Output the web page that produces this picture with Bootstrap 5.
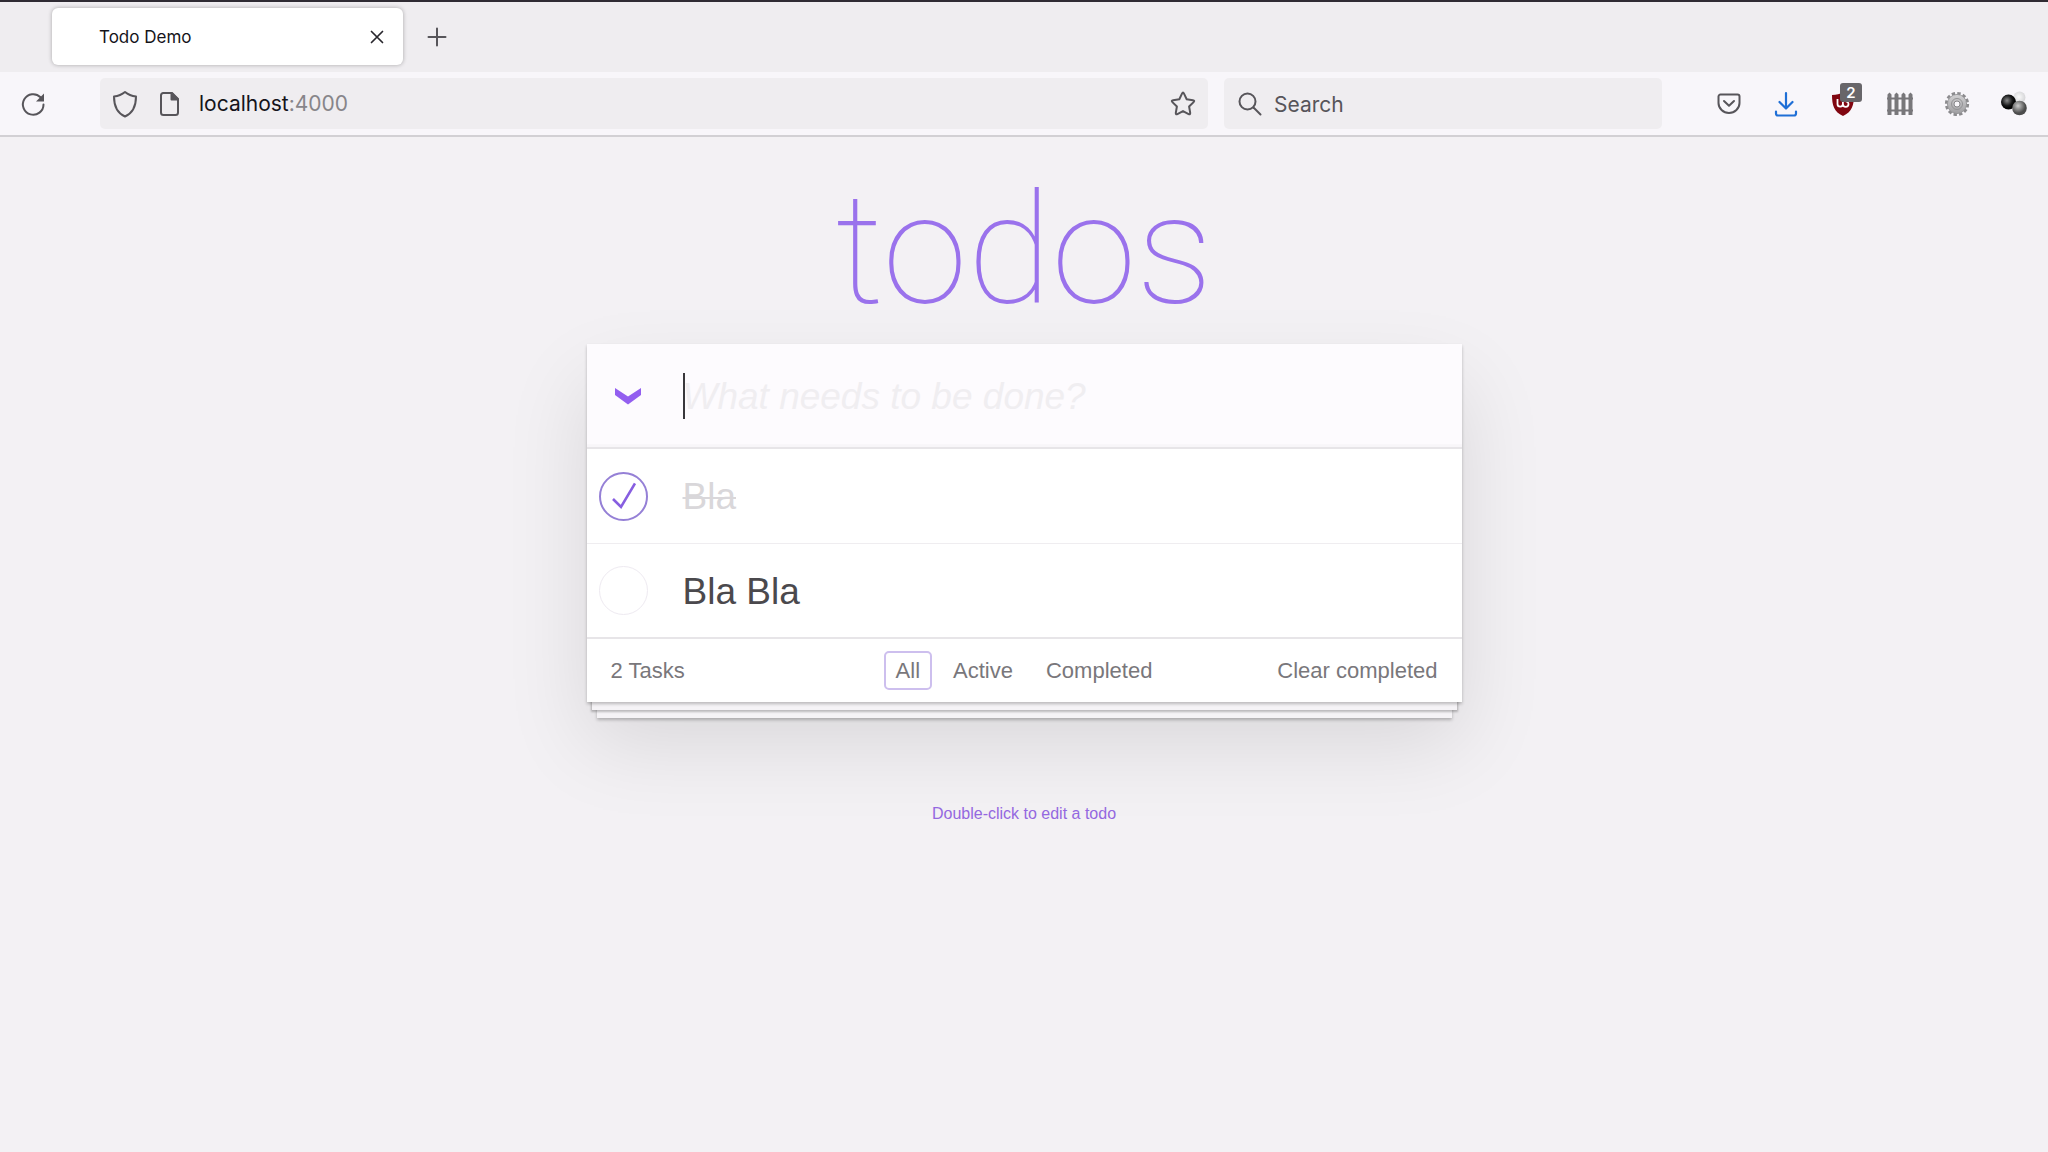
<!DOCTYPE html>
<html lang="en">
<head>
<meta charset="utf-8">
<meta name="viewport" content="width=device-width, initial-scale=1">
<title>Todo Demo</title>
<link href="https://cdn.jsdelivr.net/npm/bootstrap@5.3.0/dist/css/bootstrap.min.css" rel="stylesheet">
<style>
  :root { --ink: #4b494d; --violet: #9a72ec; --line: #e7e5e8; }
  body { background: #f3f1f4; font-family: Inter, sans-serif; }
  button { background: none; border: 0; padding: 0; color: inherit; }
  svg { display: block; }

  /* browser chrome */
  .tab-strip { height: 72px; padding: 6px 0 0 52px; background: #efedf0; border-top: 2px solid #2f2b33; }
  .page-tab { width: 351px; height: 57px; padding: 0 17px 0 47px; border-radius: 6px; background: #fff; box-shadow: 0 0 4px rgba(0,0,0,.3); font-size: 17px; color: #15141a; }
  .page-tab span { padding-top: 2px; }
  .new-tab { width: 68px; height: 57px; color: #57555a; }
  .tool-bar { height: 65px; padding-right: 6px; background: #f8f6fa; border-bottom: 2px solid #d2d0d4; color: #57555a; }
  .reload { width: 65px; margin-right: 35px; }
  .field { height: 51px; border-radius: 5px; background: #efedf0; }
  .field input { width: 100%; min-width: 0; border: 0; padding: 2px 0 0; background: none; outline: 0; font-size: 21px; color: #57555a; }
  .field input::placeholder { color: #57555a; opacity: 1; }
  .url-field { padding: 0 12px; margin-right: 16px; }
  .url-text { margin-left: 13px; font-size: 21px; color: #15141a; text-decoration: none; }
  .url-text span { color: #87858a; }
  .search-field { width: 438px; padding: 0 14px; margin-right: 38px; }
  .tool { width: 57px; height: 48px; }
  .count-badge { top: 3px; left: 26px; width: 22px; height: 19px; border-radius: 3px; background: #68666a; color: #fff; font-size: 15px; font-weight: 600; line-height: 19px; }

  /* todo app */
  .todo-app { font-family: "Liberation Sans", Arial, sans-serif; color: var(--ink); padding-top: 20px; }
  .todo-app h1 { margin: 0; font-family: Roboto, sans-serif; font-weight: 100; font-size: 154px; line-height: 187px; color: var(--violet); }
  .todo-card { width: 875px; max-width: 100%; background: #fff; box-shadow: 0 2px 3px rgba(0,0,0,.24), 0 13px 0 -5px #f5f3f6, 0 14px 2px -4px rgba(0,0,0,.24), 0 26px 0 -10px #f5f3f6, 0 28px 3px -10px rgba(0,0,0,.24), 0 40px 80px 0 rgba(0,0,0,.11); }
  .entry { height: 105px; background: #fdfbfe; border-bottom: 2px solid var(--line); box-shadow: inset 0 -3px 1px rgba(0,0,0,.02); }
  .lead-cell { width: 75px; flex: none; }
  .lead-cell button { padding-left: 1px; margin-left: 2px; }
  .entry input { width: 100%; height: 60px; padding: 2px 0 0; margin-left: 21px; border: 0; outline: 0; background: none; font-size: 37px; color: var(--ink); }
  .entry input::placeholder { font-style: italic; color: #f0eef1; opacity: 1; }
  .text-caret { left: 96px; width: 2px; height: 46px; background: #39373b; }
  .task { height: 94px; }
  .task + .task { border-top: 1px solid #efedf0; }
  .task label { padding-top: 2px; margin-left: 21px; font-size: 37px; line-height: 48px; }
  .task .done { color: #d9d7da; text-decoration: line-through; text-decoration-thickness: 2px; }
  .toggle { appearance: none; width: 49px; height: 49px; margin: 0 0 0 12px; border: 1px solid #eeeaf1; border-radius: 50%; }
  .toggle:checked { border: 2px solid #9580d6; }
  .tick { left: 25px; pointer-events: none; }
  .foot { display: grid; grid-template-columns: 1fr auto 1fr; align-items: center; height: 65px; padding: 0 24px; border-top: 2px solid var(--line); font-size: 22px; color: #79777b; }
  .filters { gap: 9px; }
  .filters a { padding: 3px 10px; border: 2px solid transparent; border-radius: 5px; line-height: 29px; color: inherit; text-decoration: none; }
  .filters .chosen { border-color: #cdbfee; }
  .hint { margin: 100px 0 0; font-size: 16px; line-height: 24px; color: #9468e0; }
</style>
<script src="https://cdn.jsdelivr.net/npm/bootstrap@5.3.0/dist/js/bootstrap.bundle.min.js"></script>
</head>
<body>
<header>
  <div class="tab-strip d-flex">
    <div class="page-tab d-flex align-items-center justify-content-between">
      <span>Todo Demo</span>
      <button type="button" aria-label="Close tab"><svg width="18" height="18" viewBox="0 0 18 18" fill="none" stroke="#29272d" stroke-width="1.7" stroke-linecap="round"><path d="M3.5 3.500l11 11M14.500 3.500l-11 11"/></svg></button>
    </div>
    <button type="button" class="new-tab d-flex align-items-center justify-content-center" aria-label="New tab"><svg width="20" height="20" viewBox="0 0 20 20" fill="none" stroke="currentColor" stroke-width="2" stroke-linecap="round"><path d="M10 1.500v17M1.500 10h17"/></svg></button>
  </div>
  <div class="tool-bar d-flex align-items-center">
    <button type="button" class="reload d-flex justify-content-center" aria-label="Reload"><svg width="26" height="26" viewBox="0 0 26 26" fill="none" stroke="currentColor" stroke-width="2" stroke-linecap="round"><path d="M23.500 13.500A10.300 10.300 0 1 1 20.500 6.200"/><path d="M24 2.500v8h-8z" fill="currentColor" stroke="none"/></svg></button>
    <div class="field url-field d-flex align-items-center flex-grow-1">
      <svg width="26" height="28" viewBox="0 0 26 28" fill="none" stroke="currentColor" stroke-width="2" stroke-linejoin="round"><path d="M13 2c3 2.500 6.500 4 11 4.500C24 15 21 23 13 26.500 5 23 2 15 2 6.500 6.500 6 10 4.500 13 2z"/></svg>
      <svg class="ms-3" width="32" height="26" viewBox="-5 0 32 26" fill="none" stroke="currentColor" stroke-width="2" stroke-linejoin="round"><path d="M4 2h9l6 6v13.500a2.500 2.500 0 0 1-2.500 2.500h-12A2.500 2.500 0 0 1 2 21.500V4.500A2.500 2.500 0 0 1 4 2z"/><path d="M12.500 2v6.500H19z" fill="currentColor"/></svg>
      <a class="url-text flex-grow-1" href="#">localhost<span>:4000</span></a>
      <button type="button" aria-label="Bookmark"><svg width="26" height="26" viewBox="0 0 26 26" fill="none" stroke="currentColor" stroke-width="2" stroke-linejoin="round"><path d="M12 2.600q1-2 2 0l2.700 5.700 6.200.9q2.200.4.700 1.900l-4.500 4.400 1.100 6.400q.2 2-1.600 1.200L13 20.100l-5.600 3q-1.800.8-1.600-1.200l1.100-6.400L2.400 11.100Q.9 9.600 3.100 9.200l6.200-.9z"/></svg></button>
    </div>
    <div class="field search-field d-flex align-items-center">
      <svg class="flex-shrink-0" width="24" height="24" viewBox="0 0 24 24" fill="none" stroke="currentColor" stroke-width="2" stroke-linecap="round"><circle cx="9.500" cy="9.500" r="8"/><path d="M15.500 15.500l7 7"/></svg>
      <input class="ms-2 ps-1" type="text" placeholder="Search" aria-label="Search">
    </div>
    <button type="button" class="tool d-flex align-items-center justify-content-center" aria-label="Pocket"><svg width="24" height="22" viewBox="0 0 24 22" fill="none" stroke="currentColor" stroke-width="2" stroke-linecap="round" stroke-linejoin="round"><path d="M3.500 1.500h17a2 2 0 0 1 2 2V10a10.500 10 0 0 1-21 0V3.500a2 2 0 0 1 2-2z"/><path d="M7 8l5 4.800L17 8"/></svg></button>
    <button type="button" class="tool d-flex align-items-center justify-content-center" aria-label="Downloads"><svg width="24" height="26" viewBox="0 0 24 26" fill="none" stroke="#1f6fd6" stroke-width="2.200" stroke-linecap="round" stroke-linejoin="round"><path d="M12 2v15M5.500 11l6.500 6.500L18.500 11M2 20.500v2a2 2 0 0 0 2 2h16a2 2 0 0 0 2-2v-2"/></svg></button>
    <button type="button" class="tool d-flex align-items-center justify-content-center position-relative" aria-label="Content blocker"><svg width="24" height="26" viewBox="0 0 24 26"><path d="M12 1c3 2.300 6.500 3 11 3 0 10-2 17-11 21C3 21 1 14 1 4c4.500 0 8-.7 11-3z" fill="#800610"/><path d="M6.500 8v5a2.700 2.700 0 0 0 5.400 0v-2m0 2a2.700 2.700 0 0 0 5.600 0 2.700 2.700 0 0 0-2.800-2.700" fill="none" stroke="#fff" stroke-width="1.800"/></svg><span class="count-badge position-absolute text-center">2</span></button>
    <button type="button" class="tool d-flex align-items-center justify-content-center" aria-label="Fence"><svg width="26" height="24" viewBox="0 0 26 24" fill="#78777a"><path d="M0 5.500h26v2H0zM0 17.500h26v2H0z"/><path d="M.5 2.500L2.500.500l2 2V23h-4zM7.500 2.500l2-2 2 2V23h-4zM14.500 2.500l2-2 2 2V23h-4zM21.500 2.500l2-2 2 2V23h-4z"/></svg></button>
    <button type="button" class="tool d-flex align-items-center justify-content-center" aria-label="Settings"><svg width="26" height="26" viewBox="0 0 26 26"><defs><linearGradient id="steel" x2="0" y2="1"><stop stop-color="#d2d1d3"/><stop offset="1" stop-color="#a09fa2"/></linearGradient></defs><circle cx="13" cy="13" r="10.800" fill="none" stroke="#8c8b8e" stroke-width="2.600" stroke-dasharray="3.400 2.250"/><circle cx="13" cy="13" r="9.600" fill="url(#steel)" stroke="#8c8b8e" stroke-width=".8"/><circle cx="13" cy="13" r="5.500" fill="none" stroke="#949396"/><circle cx="13" cy="13" r="3" fill="#f8f6fa" stroke="#88878a"/></svg></button>
    <button type="button" class="tool d-flex align-items-center justify-content-center" aria-label="Spheres"><svg width="26" height="26" viewBox="0 0 26 26"><defs><radialGradient id="ballDark" cx=".4" cy=".4"><stop stop-color="#8a8a8a"/><stop offset=".7" stop-color="#19191a"/><stop offset="1" stop-color="#050505"/></radialGradient><radialGradient id="ballMid" cx=".4" cy=".35"><stop stop-color="#ccc"/><stop offset="1" stop-color="#4c4c4c"/></radialGradient><radialGradient id="ballPale" cx=".45" cy=".45"><stop stop-color="#fafafa"/><stop offset="1" stop-color="#d8d8da"/></radialGradient></defs><circle cx="18.500" cy="6.500" r="6" fill="url(#ballPale)"/><circle cx="7.500" cy="11" r="7.500" fill="url(#ballDark)"/><circle cx="18.500" cy="17" r="7.300" fill="url(#ballMid)"/></svg></button>
  </div>
</header>

<main class="todo-app d-flex flex-column align-items-center">
  <h1>todos</h1>
  <section class="todo-card">
    <div class="entry d-flex align-items-center position-relative">
      <div class="lead-cell"><button type="button" class="w-100 d-flex" aria-label="Toggle all"><svg class="ms-4" width="28" height="18" viewBox="0 0 28 18"><path d="M1 1l13 8.500L27 1v7L14 17.500 1 8z" fill="#935ff0"/></svg></button></div>
      <input type="text" placeholder="What needs to be done?" aria-label="New todo">
      <span class="text-caret position-absolute"></span>
    </div>
    <div class="task d-flex align-items-center position-relative">
      <div class="lead-cell d-flex"><input class="toggle" type="checkbox" id="task1" checked></div>
      <svg class="tick position-absolute" width="24" height="28" viewBox="0 0 24 28" fill="none" stroke="#875ee0" stroke-width="2.600"><path d="M1 17l8 8L23 1.500"/></svg>
      <label class="done" for="task1">Bla</label>
    </div>
    <div class="task d-flex align-items-center">
      <div class="lead-cell d-flex"><input class="toggle" type="checkbox" id="task2"></div>
      <label for="task2">Bla Bla</label>
    </div>
    <div class="foot">
      <span>2 Tasks</span>
      <nav class="filters d-flex"><a class="chosen" href="#">All</a><a href="#">Active</a><a href="#">Completed</a></nav>
      <button type="button" class="text-end">Clear completed</button>
    </div>
  </section>
  <p class="hint">Double-click to edit a todo</p>
</main>
</body>
</html>
